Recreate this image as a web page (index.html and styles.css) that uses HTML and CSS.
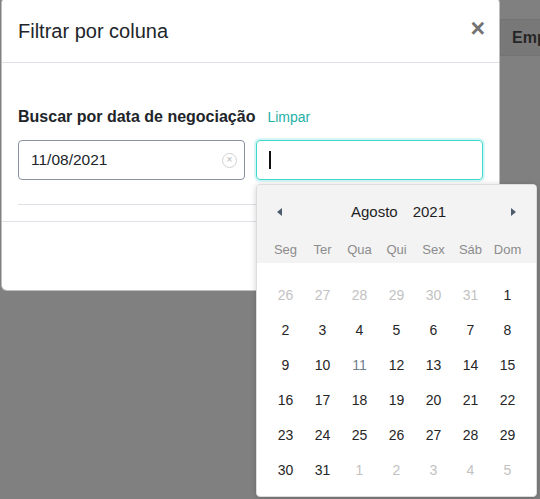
FILE: index.html
```html
<!DOCTYPE html>
<html lang="pt">
<head>
<meta charset="utf-8">
<title>Filtrar por coluna</title>
<link rel="stylesheet" href="styles.css">
</head>
<body>
<div class="page">
  <div class="table-head"><span class="th">Emp</span></div>
</div>

<div class="modal">
  <div class="modal-header">
    <h5 class="modal-title">Filtrar por coluna</h5>
    <button class="close" type="button">×</button>
  </div>
  <div class="modal-body">
    <div class="label-row">
      <span class="label">Buscar por data de negociação</span>
      <a class="clear-link">Limpar</a>
    </div>
    <div class="inputs">
      <div class="input">
        <span class="value">11/08/2021</span>
        <span class="clear-icon">×</span>
      </div>
      <div class="input focused">
        <span class="caret"></span>
      </div>
    </div>
    <div class="rule"></div>
  </div>
  <div class="modal-footer"></div>
</div>

<div class="picker">
  <div class="picker-head">
    <div class="month-row">
      <span class="arrow left"></span>
      <span class="month">Agosto<span class="year">2021</span></span>
      <span class="arrow right"></span>
    </div>
    <div class="weekdays">
      <span>Seg</span><span>Ter</span><span>Qua</span><span>Qui</span><span>Sex</span><span>Sáb</span><span>Dom</span>
    </div>
  </div>
  <div class="days">
    <span class="muted">26</span><span class="muted">27</span><span class="muted">28</span><span class="muted">29</span><span class="muted">30</span><span class="muted">31</span><span>1</span>
    <span>2</span><span>3</span><span>4</span><span>5</span><span>6</span><span>7</span><span>8</span>
    <span>9</span><span>10</span><span class="start">11</span><span>12</span><span>13</span><span>14</span><span>15</span>
    <span>16</span><span>17</span><span>18</span><span>19</span><span>20</span><span>21</span><span>22</span>
    <span>23</span><span>24</span><span>25</span><span>26</span><span>27</span><span>28</span><span>29</span>
    <span>30</span><span>31</span><span class="muted">1</span><span class="muted">2</span><span class="muted">3</span><span class="muted">4</span><span class="muted">5</span>
  </div>
</div>
</body>
</html>
```

FILE: styles.css
```css
* { box-sizing: border-box; }

html, body {
  margin: 0;
  height: 100%;
}

body {
  background: #808080;
  font-family: "Liberation Sans", Arial, sans-serif;
  color: #212529;
  overflow: hidden;
  position: relative;
}

.page {
  padding-top: 19px;
  padding-left: 500px;
}

.table-head {
  height: 37px;
  background: #787878;
  border-top: 1px solid #737373;
  border-bottom: 1px solid #737373;
  border-left: 1px solid #737373;
  display: flex;
  align-items: center;
  padding-left: 11px;
}

.th {
  font-weight: bold;
  font-size: 16px;
  color: #262626;
}

.modal {
  position: absolute;
  left: 1px;
  top: -3px;
  width: 499px;
  height: 294px;
  background: #fff;
  border: 1px solid rgba(0, 0, 0, 0.25);
  border-radius: 6px;
  display: flex;
  flex-direction: column;
}

.modal-header {
  height: 65px;
  border-bottom: 1px solid #dee2e6;
  display: flex;
  align-items: center;
  justify-content: space-between;
  padding: 3px 14px 0 16px;
}

.modal-title {
  margin: 0;
  font-size: 20px;
  font-weight: normal;
  color: #212529;
}

.close {
  border: 0;
  background: none;
  padding: 0;
  font-family: "Liberation Sans", Arial, sans-serif;
  font-size: 25px;
  font-weight: bold;
  line-height: 1;
  color: #737373;
  margin-top: -6px;
}

.modal-body {
  padding: 42px 16px 16px 16px;
}

.label-row {
  height: 24px;
  display: flex;
  align-items: center;
  gap: 12px;
  margin-bottom: 11px;
}

.label {
  font-weight: bold;
  font-size: 16px;
  color: #212529;
}

.clear-link {
  font-size: 14px;
  color: #1fb0a6;
}

.inputs {
  display: flex;
  gap: 11px;
}

.input {
  width: 227px;
  height: 40px;
  border: 1px solid #8a93a4;
  border-radius: 4px;
  display: flex;
  align-items: center;
  justify-content: space-between;
  padding: 0 7px 0 12px;
}

.input.focused {
  border-color: #3ed8ce;
  box-shadow: 0 0 0 2px rgba(62, 216, 206, 0.22);
}

.value {
  font-size: 15.5px;
  color: #212529;
}

.clear-icon {
  width: 15px;
  height: 15px;
  border: 1px solid #d2d2d2;
  border-radius: 50%;
  font-size: 10px;
  line-height: 12px;
  text-align: center;
  color: #b5b5b5;
}

.caret {
  width: 1.5px;
  height: 18px;
  background: #111;
}

.rule {
  margin-top: 24px;
  height: 1px;
  background: #dee2e6;
}

.modal-footer {
  flex: 1;
  border-top: 1px solid #dee2e6;
}

.picker {
  position: absolute;
  left: 256px;
  top: 184px;
  width: 281px;
  height: 313px;
  background: #fff;
  border: 1px solid #dcdcdc;
  border-radius: 4px;
  box-shadow: 0 1px 6px rgba(0, 0, 0, 0.18);
  overflow: hidden;
}

.picker-head {
  background: #f3f3f3;
  padding: 0 10px 2px;
  height: 78px;
}

.month-row {
  height: 53px;
  display: flex;
  align-items: center;
  justify-content: space-between;
  padding: 0 10px 0 10px;
}

.month {
  font-size: 15px;
  color: #1f1f1f;
  margin-left: 4px;
}

.year {
  margin-left: 15px;
}

.arrow {
  width: 0;
  height: 0;
  border-top: 4.5px solid transparent;
  border-bottom: 4.5px solid transparent;
}

.arrow.left { border-right: 5px solid #4c5c6b; }
.arrow.right { border-left: 5px solid #4c5c6b; }

.weekdays {
  display: grid;
  grid-template-columns: repeat(7, 1fr);
  height: 22px;
  align-items: center;
  text-align: center;
  font-size: 13px;
  color: #8c8c8c;
}

.days {
  display: grid;
  grid-template-columns: repeat(7, 1fr);
  grid-auto-rows: 35px;
  padding: 14px 10px 0;
  text-align: center;
  font-size: 14px;
  color: #262626;
}

.days span {
  display: flex;
  align-items: center;
  justify-content: center;
}

.days .muted { color: #c2c2c2; }
.days .start { color: #6f7f8c; }
```
